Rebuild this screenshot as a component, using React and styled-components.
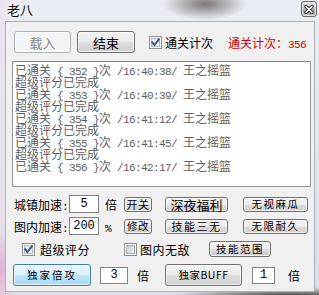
import React from 'react';
import styled, { createGlobalStyle } from 'styled-components';

const Global = createGlobalStyle`
  html, body { margin: 0; padding: 0; }
  body {
    width: 319px; height: 295px; overflow: hidden;
    font-family: "Noto Sans CJK SC", "Noto Sans", sans-serif;
  }
`;

const CJK = `"Noto Sans CJK SC", "Noto Sans", sans-serif`;

const Frame = styled.div`
  width: 319px; height: 295px; box-sizing: border-box;
  display: flex; flex-direction: column;
  background:
    radial-gradient(42px 16px at 205px 4px, rgba(105,98,95,0.85), rgba(105,98,95,0) 100%),
    radial-gradient(22px 40px at 0px 270px, rgba(225,160,205,0.75), rgba(225,160,205,0) 100%),
    radial-gradient(120px 10px at 290px 297px, rgba(30,30,30,0.9), rgba(30,30,30,0) 100%),
    linear-gradient(to right, rgba(236,220,236,0.6), rgba(255,255,255,0) 12px),
    linear-gradient(to bottom, #e9eef4 0%, #e3e8ee 40%, #dcdfe6 100%);
`;

const TitleBar = styled.div`
  height: 21px; flex: none;
  display: flex; justify-content: space-between; align-items: flex-start;
  padding: 0 2px 0 7px;
`;

const Title = styled.div`
  margin-top: 2px;
  font-family: ${CJK}; font-size: 13px; line-height: 16px; color: #000;
  text-shadow: 0 0 6px #fff, 0 0 3px #fff, 0 0 2px #fff;
`;

const CloseBtn = styled.div`
  margin-top: 1px;
  width: 16px; height: 16px; box-sizing: border-box;
  border: 1px solid #6a6a6a; border-radius: 3px;
  background: linear-gradient(to bottom, #e2e2e2 0%, #c4c4c4 50%, #a9a9a9 51%, #bdbdbd 100%);
  box-shadow: inset 0 0 0 1px rgba(255,255,255,0.55);
  display: flex; align-items: center; justify-content: center;
`;

const Client = styled.div`
  flex: 1; margin: 0 4px 3px 5px;
  box-sizing: border-box;
  border: 1px solid rgba(90,100,115,0.45);
  background: #f0f0f0;
  display: flex; flex-direction: column;
  padding: 9px 3px 0 6px;
`;

const TopRow = styled.div`
  display: flex; align-items: center; height: 22px;
  padding-left: 2px;
`;

const WinButton = styled.div`
  box-sizing: border-box; flex: none;
  width: ${p => p.$w}px; height: ${p => p.$h}px;
  margin-left: ${p => p.$ml || 0}px;
  border: 1px solid ${p => p.$kind === 'disabled' ? '#adb2b5' : p.$kind === 'hot' ? '#3c7fb1' : '#707070'};
  border-radius: 3px;
  background: ${p => p.$kind === 'disabled'
    ? '#f4f4f4'
    : p.$kind === 'hot'
      ? 'linear-gradient(to bottom, #eaf6fd 0%, #d9f0fc 50%, #bee6fd 51%, #a7d9f5 100%)'
      : 'linear-gradient(to bottom, #f2f2f2 0%, #ebebeb 50%, #dddddd 51%, #cfcfcf 100%)'};
  box-shadow: inset 0 0 0 1px rgba(255,255,255,0.7);
  display: flex; align-items: center; justify-content: center;
  font-family: ${CJK};
  font-size: ${p => p.$fs || 13}px;
  letter-spacing: ${p => p.$ls || 0}px;
  color: ${p => p.$kind === 'disabled' ? '#8a8a8a' : '#000'};
  line-height: 1;
  white-space: nowrap;
`;

const CheckItem = styled.div`
  display: flex; align-items: center; flex: none;
  width: ${p => p.$w ? p.$w + 'px' : 'auto'};
  margin-left: ${p => p.$ml || 0}px;
  font-family: ${CJK}; font-size: 12px; color: #000;
  letter-spacing: ${p => p.$ls || 0}px;
`;

const BoxLabel = styled.span`
  margin-left: ${p => p.$gap}px;
`;

const RedCount = styled.div`
  margin-left: 15px;
  font-family: ${CJK}; font-size: 12px; color: #d40000;
`;

const Ascii = styled.span`
  font-family: "Liberation Mono", "DejaVu Sans Mono", monospace;
  font-size: 11px; letter-spacing: -0.6px;
`;

const LogBox = styled.div`
  margin-top: 8px;
  width: 299px; height: 126px; box-sizing: border-box;
  border: 1px solid #8f949c;
  border-top-color: #7d828a;
  background: #fff;
  padding: 2px 0 0 2px;
  font-family: ${CJK}; font-size: 12px; line-height: 12px;
  color: #606060;
  overflow: hidden;
`;

const LogLine = styled.div`
  height: 12px; white-space: pre;
`;

const Controls = styled.div`
  display: flex; flex-direction: column;
  margin-top: 8px;
`;

const Row = styled.div`
  display: flex; align-items: center;
  height: ${p => p.$h}px;
  margin-top: ${p => p.$mt || 0}px;
  padding-left: ${p => p.$pl || 0}px;
`;

const FieldLabel = styled.div`
  width: 55px; flex: none;
  font-family: ${CJK}; font-size: 12px; color: #000; white-space: nowrap;
`;

const Field = styled.div`
  box-sizing: border-box; flex: none;
  width: ${p => p.$w}px; height: ${p => p.$h}px;
  margin-left: ${p => p.$ml || 0}px;
  border: 1px solid #7f848c;
  background: #fff;
  display: flex; align-items: center; justify-content: center;
  font-family: "Liberation Mono", monospace; font-size: 12px; color: #000;
`;

const Unit = styled.div`
  flex: none; width: 12px;
  margin-left: ${p => p.$ml || 0}px;
  font-family: ${CJK}; font-size: 12px; color: #000;
`;

function Mixed({ text }) {
  const parts = text.split(/([\x20-\x7e]+)/).filter(Boolean);
  return parts.map((p, i) => (/^[\x20-\x7e]+$/.test(p) ? <Ascii key={i}>{p}</Ascii> : <React.Fragment key={i}>{p}</React.Fragment>));
}

function CheckBox({ checked }) {
  const id = checked ? 'cbOn' : 'cbOff';
  return (
    <svg width="13" height="13" viewBox="0 0 13 13" style={{ flex: 'none', display: 'block' }}>
      <defs>
        <linearGradient id={id} x1="0" y1="0" x2="1" y2="1">
          <stop offset="0" stopColor={checked ? '#dfe6ee' : '#c6cacf'} />
          <stop offset="1" stopColor={checked ? '#fbfcfd' : '#eceef0'} />
        </linearGradient>
      </defs>
      <rect x="0.5" y="0.5" width="12" height="12" fill="#fff" stroke="#8e8f8f" />
      <rect x="2.5" y="2.5" width="8" height="8" fill={`url(#${id})`} stroke={checked ? '#b3bac4' : '#a9adb2'} />
      {checked && (
        <path d="M3.2 6.4 L5.4 9 L9.9 3.4" fill="none" stroke="#3b4f82" strokeWidth="1.9" strokeLinecap="square" />
      )}
    </svg>
  );
}

const log = [
  '已通关 { 352 }次 /16:40:38/ 王之摇篮',
  '超级评分已完成',
  '已通关 { 353 }次 /16:40:39/ 王之摇篮',
  '超级评分已完成',
  '已通关 { 354 }次 /16:41:12/ 王之摇篮',
  '超级评分已完成',
  '已通关 { 355 }次 /16:41:45/ 王之摇篮',
  '超级评分已完成',
  '已通关 { 356 }次 /16:42:17/ 王之摇篮',
];

export default function App() {
  return (
    <>
      <Global />
      <Frame>
        <TitleBar>
          <Title>老八</Title>
          <CloseBtn>
            <svg width="10" height="9" viewBox="0 0 10 9">
              <path d="M2 1.5 L8 7.5 M8 1.5 L2 7.5" stroke="#2a2a2a" strokeWidth="3.4" strokeLinecap="round" />
              <path d="M2 1.5 L8 7.5 M8 1.5 L2 7.5" stroke="#fff" strokeWidth="1.6" strokeLinecap="round" />
            </svg>
          </CloseBtn>
        </TitleBar>
        <Client>
          <TopRow>
            <WinButton $w={57} $h={22} $kind="disabled">载入</WinButton>
            <WinButton $w={58} $h={22} $ml={6}>结束</WinButton>
            <CheckItem $ml={14}>
              <CheckBox checked />
              <BoxLabel $gap={3}>通关计次</BoxLabel>
            </CheckItem>
            <RedCount>通关计次：<Mixed text="356" /></RedCount>
          </TopRow>
          <LogBox>
            {log.map((l, i) => (
              <LogLine key={i}><Mixed text={l} /></LogLine>
            ))}
          </LogBox>
          <Controls>
            <Row $h={18} $pl={2}>
              <FieldLabel>城镇加速<Ascii>:</Ascii></FieldLabel>
              <Field $w={30} $h={18}>5</Field>
              <Unit $ml={6}>倍</Unit>
              <WinButton $w={28} $h={15} $ml={7} $fs={11} $ls={0.5}>开关</WinButton>
              <WinButton $w={63} $h={15} $ml={13} $fs={13}>深夜福利</WinButton>
              <WinButton $w={65} $h={15} $ml={15} $fs={10.5} $ls={1.5}>无视麻瓜</WinButton>
            </Row>
            <Row $h={18} $mt={4} $pl={2}>
              <FieldLabel>图内加速<Ascii>:</Ascii></FieldLabel>
              <Field $w={30} $h={18}>200</Field>
              <Unit $ml={6}><Ascii>%</Ascii></Unit>
              <WinButton $w={28} $h={15} $ml={7} $fs={10.5} $ls={0.5}>修改</WinButton>
              <WinButton $w={63} $h={15} $ml={13} $fs={11} $ls={1.5}>技能三无</WinButton>
              <WinButton $w={65} $h={15} $ml={15} $fs={10.5} $ls={1.5}>无限耐久</WinButton>
            </Row>
            <Row $h={18} $mt={5} $pl={10}>
              <CheckItem $w={102} $ls={0.5}>
                <CheckBox checked />
                <BoxLabel $gap={5}>超级评分</BoxLabel>
              </CheckItem>
              <CheckItem $w={85} $ls={0.5}>
                <CheckBox />
                <BoxLabel $gap={3}>图内无敌</BoxLabel>
              </CheckItem>
              <WinButton $w={62} $h={16} $fs={10.5} $ls={1.5}>技能范围</WinButton>
            </Row>
            <Row $h={22} $mt={6} $pl={1}>
              <WinButton $w={78} $h={22} $kind="hot" $fs={10.5} $ls={2}>独家倍攻</WinButton>
              <Field $w={28} $h={17} $ml={9}>3</Field>
              <Unit $ml={9}>倍</Unit>
              <WinButton $w={77} $h={22} $ml={16} $fs={10.5} $ls={0.5}>独家BUFF</WinButton>
              <Field $w={23} $h={17} $ml={10}>1</Field>
              <Unit $ml={13}>倍</Unit>
            </Row>
          </Controls>
        </Client>
      </Frame>
    </>
  );
}
